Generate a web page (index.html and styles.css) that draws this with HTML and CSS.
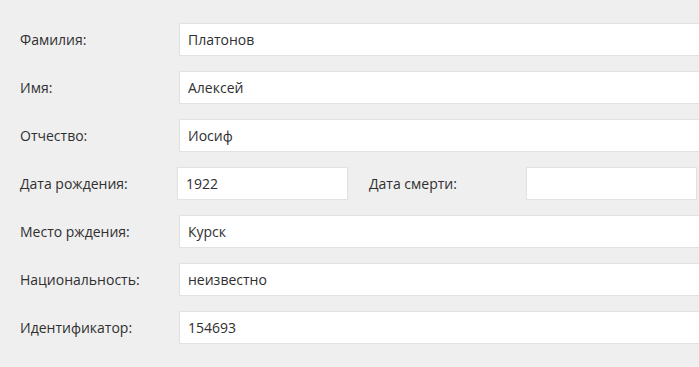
FILE: index.html
```html
<!DOCTYPE html>
<html lang="ru">
<head>
  <meta charset="UTF-8"/>
  <title>Анкета</title>
  <link rel="stylesheet" href="styles.css">
</head>
<body>
  <form class="person-form">
    <div class="row">
      <label>Фамилия:</label>
      <input type="text" class="field wide" value="Платонов">
    </div>
    <div class="row">
      <label>Имя:</label>
      <input type="text" class="field wide" value="Алексей">
    </div>
    <div class="row">
      <label>Отчество:</label>
      <input type="text" class="field wide" value="Иосиф">
    </div>
    <div class="row dates">
      <label>Дата рождения:</label>
      <input type="text" class="field short" value="1922">
      <label class="inner">Дата смерти:</label>
      <input type="text" class="field short" value="">
    </div>
    <div class="row">
      <label>Место рждения:</label>
      <input type="text" class="field wide" value="Курск">
    </div>
    <div class="row">
      <label>Национальность:</label>
      <input type="text" class="field wide" value="неизвестно">
    </div>
    <div class="row">
      <label>Идентификатор:</label>
      <input type="text" class="field wide" value="154693">
    </div>
  </form>
</body>
</html>
```

FILE: styles.css
```css
body {
  margin: 0;
  background: #efefef;
  font-family: "Open Sans", Arial, sans-serif;
  color: #2f2f2f;
}

.person-form {
  padding: 23px 0 0 20px;
}

.row {
  display: flex;
  align-items: center;
  margin-bottom: 15px;
}

.row label {
  width: 159px;
  flex-shrink: 0;
  font-size: 14px;
}

.row.dates label {
  width: 157px;
}

.row.dates label.inner {
  margin-left: 21px;
}

.field {
  box-sizing: border-box;
  height: 33px;
  padding: 0 8px;
  border: 1px solid #e2e2e2;
  background: #fff;
  font-family: inherit;
  font-size: 14px;
  color: #2f2f2f;
  outline: none;
  box-shadow: 0 0 1px rgba(0,0,0,0.04);
}

/* full-width fields run off the right edge, no closing border */
.field.wide {
  flex: 1;
  min-width: 0;
  border-right: 0;
}

.field.short {
  width: 171px;
}
```
